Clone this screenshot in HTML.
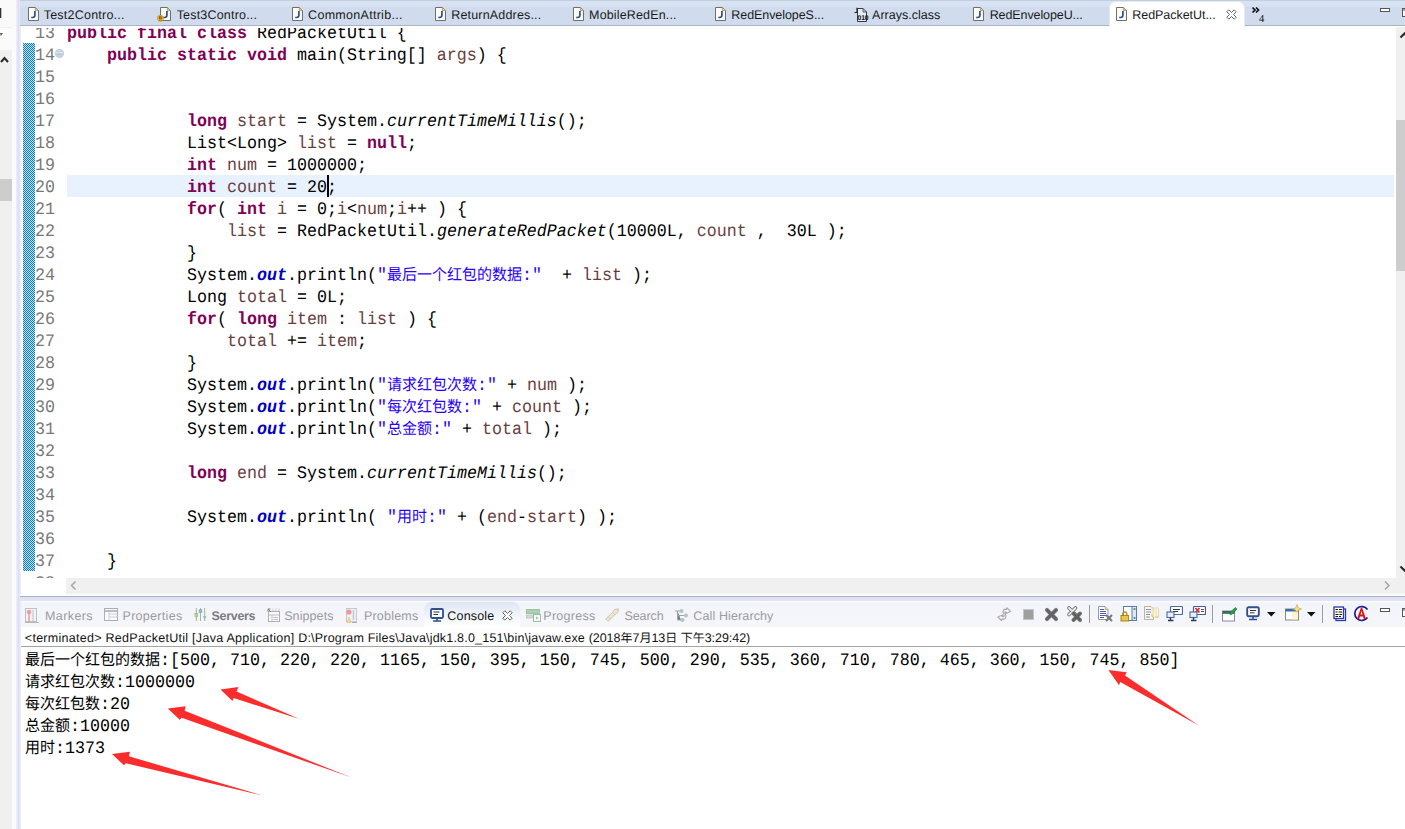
<!DOCTYPE html>
<html><head><meta charset="utf-8"><title>Eclipse</title>
<style>
*{box-sizing:border-box;margin:0;padding:0}
html,body{width:1405px;height:829px;overflow:hidden;background:#fff}
body{position:relative;font-family:"Liberation Sans",sans-serif;font-size:12.5px;color:#000;text-rendering:geometricPrecision;-webkit-font-smoothing:antialiased}
.abs{position:absolute}
/* left strip */
#left{position:absolute;left:0;top:0;width:12px;height:829px;background:#f0f0f0}
#leftw{position:absolute;left:12px;top:0;width:8px;height:829px;background:#fbfbfd}
#ledge{position:absolute;left:16px;top:0;width:5px;height:829px;background:linear-gradient(90deg,#f1f1fb,#dcdff5 50%,#eef0fa)}
/* editor tab bar */
#tabbar{position:absolute;left:20px;top:0;width:1385px;height:26px;background:linear-gradient(#c3cddd 0,#c3cddd 1px,#d8e3f3 1px,#d6e1f1 6px,#d0dced 8px,#d0dcee 100%);border-bottom:1px solid #aab4c6}
.tab{position:absolute;top:0;height:26px;white-space:nowrap}
.tab svg{position:absolute;top:7px;left:0}
.tab span{position:absolute;left:16px;top:7.5px;line-height:15px;color:#1a1a1a}
#atab{position:absolute;left:1109px;top:1px;width:136px;height:26px;background:#fff;border-radius:7px 7px 0 0;border:1px solid #e4eaf4;border-bottom:0}
/* editor */
#ed{position:absolute;left:0;top:0;width:1405px;height:578px;overflow:hidden;clip-path:inset(28px 0 0 0)}
.ln,.cl,.co{position:absolute;font-family:"Liberation Mono",monospace;font-size:16.664px;line-height:22px;height:22px;white-space:pre;transform:scaleY(1.06);transform-origin:0 15.5px}
.ln{left:35px;width:20px;color:#787878;text-align:right}
.k{color:#7f0055;font-weight:bold}
.v{color:#6a3e3e}
.s{color:#2a00ff}
.i{font-style:italic}
.f{color:#0000c0;font-weight:bold;font-style:italic}
.co{left:25px}
span.cj{font-family:"Liberation Mono","Noto Sans CJK SC",monospace;font-size:15px;letter-spacing:0}
span.cjs{font-family:"Liberation Sans","Noto Sans CJK SC",sans-serif;font-size:12px;letter-spacing:0}
#qd{position:absolute;left:23px;top:43px;width:12px;height:528px;background-color:#4f9fd6;
 background-image:linear-gradient(45deg,#2f86c4 25%,transparent 25%,transparent 75%,#2f86c4 75%),linear-gradient(45deg,#2f86c4 25%,transparent 25%,transparent 75%,#2f86c4 75%);background-size:2px 2px;background-position:0 0,1px 1px}
/* scrollbars */
#vsb{position:absolute;left:1396px;top:27px;width:9px;height:551px;background:#f0f0f0}
#vth{position:absolute;left:1396px;top:120px;width:9px;height:151px;background:#cdcdcd}
#hsb{position:absolute;left:66px;top:578px;width:1339px;height:16px;background:#f0f0f0}
#lth{position:absolute;left:0;top:179px;width:12px;height:22px;background:#cdcdcd}
/* bottom panel */
#gap{position:absolute;left:20px;top:594px;width:1385px;height:7px;background:linear-gradient(#fdfdfe 0,#fdfdfe 2px,#aab2c6 2px,#aab2c6 3px,#dcdff0 3px,#e2e5f4 7px)}
#btabs{position:absolute;left:21px;top:601px;width:1384px;height:26px;background:linear-gradient(#fbfcfe 0,#f1f4fb 3px,#f4f5fa 8px,#f5f5fa 100%)}
.bt{position:absolute;top:601px;height:26px;white-space:nowrap}
.bt svg{position:absolute;left:0;top:7px}
.bt span{position:absolute;top:7.5px;line-height:15px;color:#9b9ba1}
#ctab{position:absolute;left:424px;top:602px;width:96px;height:26px;border-radius:7px 7px 0 0;background:linear-gradient(#dfe6f3,#f4f7fb 60%,#fff)}
#desc{position:absolute;left:25px;top:631px;line-height:15px;white-space:nowrap;font-size:12.5px;color:#111}
#sep{position:absolute;left:21px;top:646px;width:1384px;height:1px;background:#a3a3a3}
.tsep{position:absolute;top:605px;width:1px;height:18px;background:#9a9aa6}
.ic{position:absolute}
</style></head>
<body>
<svg width="0" height="0" style="position:absolute"><defs>
<g id="jf"><path d="M.5 .5H7.3L10.5 3.7V13.5H.5Z" fill="#fcfcf6" stroke="#6f6f66"/><path d="M7.3 .5V3.7H10.5Z" fill="#e2cfa0" stroke="#a08a5c" stroke-width=".7"/><path d="M6.9 3.9V8.3Q6.9 10.5 4.6 10.5H3.2" stroke="#2c4f96" stroke-width="1.700" fill="none"/></g>
<g id="cx"><path d="M.8 2.800 2.800 .8 5.500 3.500 8.200 .8 10.200 2.800 7.500 5.500 10.200 8.200 8.200 10.200 5.500 7.500 2.800 10.200 .8 8.200 3.500 5.500Z" fill="#fff" stroke="#686868" stroke-width="1"/></g>
<g id="mn"><rect x=".5" y=".5" width="9" height="3" fill="#fff" stroke="#555"/></g>
<g id="mx"><rect x=".5" y=".5" width="9" height="8" fill="#fff" stroke="#555"/><path d="M.5 2H9.5" stroke="#555"/></g>
</defs></svg>
<div id="left"></div><div id="leftw"></div><div id="ledge"></div>
<div id="lth"></div>
<!-- left strip details -->
<svg class="abs" style="left:0;top:0" width="20" height="110" viewBox="0 0 20 110">
<rect x="0" y="0" width="16" height="27" fill="#fafafa"/>
<path d="M.5 8V18" stroke="#333" stroke-width="1.6"/>
<rect x="0" y="28" width="12" height="22" fill="#fbfbfb"/>
<path d="M0 33H3L.8 36Z" fill="#555"/>
<path d="M1 62 4.500 58 8 62" stroke="#2a2a2a" stroke-width="2.100" fill="none"/>
</svg>
<div id="tabbar"></div>
<div id="atab"></div>
<div class="tab" style="left:28px"><svg width="12" height="15" viewBox="0 0 12 15"><use href="#jf"/></svg><span style="left:15.7px;letter-spacing:0.229px" id="t28">Test2Contro...</span></div>
<div class="tab" style="left:161px"><svg width="16" height="16" viewBox="0 0 16 16" style="left:-4px"><g transform="translate(3,0)"><use href="#jf"/></g><circle cx="3.400" cy="11.300" r="3.100" fill="#e6ad34" stroke="#c8922a" stroke-width=".6"/><path d="M2.700 9.300V12.200M4.100 9.300V12.200" stroke="#4a3a10" stroke-width=".8"/><path d="M2.700 13.200v.5M4.100 13.200v.5" stroke="#4a3a10" stroke-width=".8"/></svg><span style="left:15.7px;letter-spacing:0.186px" id="t161">Test3Contro...</span></div>
<div class="tab" style="left:292px"><svg width="12" height="15" viewBox="0 0 12 15"><use href="#jf"/></svg><span style="left:16.1px;letter-spacing:0.287px" id="t292">CommonAttrib...</span></div>
<div class="tab" style="left:435px"><svg width="12" height="15" viewBox="0 0 12 15"><use href="#jf"/></svg><span style="left:16.3px;letter-spacing:0.167px" id="t435">ReturnAddres...</span></div>
<div class="tab" style="left:573px"><svg width="12" height="15" viewBox="0 0 12 15"><use href="#jf"/></svg><span style="left:16.1px;letter-spacing:0.15px" id="t573">MobileRedEn...</span></div>
<div class="tab" style="left:715px"><svg width="12" height="15" viewBox="0 0 12 15"><use href="#jf"/></svg><span style="left:16.3px;letter-spacing:-0.067px" id="t715">RedEnvelopeS...</span></div>
<div class="tab" style="left:855px"><svg width="16" height="15" viewBox="0 0 16 15" style="left:-1px"><path d="M3.500 1.500H9L12.500 5V14.500H3.500Z" fill="#e4ecf6" stroke="#3a3a3a" stroke-width="1"/><path d="M9 1.500V5H12.500" fill="none" stroke="#3a3a3a" stroke-width=".8"/><path d="M.5 5.500H3.500M3 .8V5.500" stroke="#222" stroke-width="1.200"/><text x="3.600" y="12.800" font-family="Liberation Sans" font-size="6.800" font-weight="bold" fill="#111" letter-spacing="-.2">010</text></svg><span style="left:17.1px;letter-spacing:0.008px" id="t855">Arrays.class</span></div>
<div class="tab" style="left:973px"><svg width="12" height="15" viewBox="0 0 12 15"><use href="#jf"/></svg><span style="left:16.7px;letter-spacing:-0.1px" id="t973">RedEnvelopeU...</span></div>
<div class="tab" style="left:1116px"><svg width="12" height="15" viewBox="0 0 12 15"><use href="#jf"/></svg><span style="left:16.3px;letter-spacing:-0.05px" id="t1116">RedPacketUt...</span></div>
<svg class="abs" style="left:1226px;top:8.5px" width="11" height="11" viewBox="0 0 11 11"><use href="#cx"/></svg>
<svg class="abs" style="left:1251px;top:6px" width="16" height="16" viewBox="0 0 16 16"><path d="M1.500 1.500 4 4 1.500 6.500M5 1.500 7.500 4 5 6.500" stroke="#111" stroke-width="1.700" fill="none"/><text x="8" y="15.500" font-family="Liberation Serif" font-size="10.500" fill="#111">4</text></svg>
<svg class="abs" style="left:1380px;top:8px" width="10" height="4" viewBox="0 0 10 4"><use href="#mn"/></svg>
<svg class="abs" style="left:1402px;top:8px" width="10" height="9" viewBox="0 0 10 9"><use href="#mx"/></svg>
<div id="ed">
<div class="abs" style="left:67px;top:175px;width:1327px;height:22px;background:#e8f2fe"></div>
<svg class="abs" style="left:23px;top:43px" width="12" height="528" shape-rendering="crispEdges"><defs><pattern id="ck" width="2" height="2" patternUnits="userSpaceOnUse"><rect width="2" height="2" fill="#b4e8fb"/><rect width="1" height="1" fill="#1a72c0"/><rect x="1" y="1" width="1" height="1" fill="#1a72c0"/></pattern></defs><rect width="12" height="528" fill="url(#ck)"/></svg>
<svg class="abs" style="left:55px;top:49px" width="9" height="9" viewBox="0 0 9 9"><circle cx="4.500" cy="4.500" r="4.200" fill="#c6d3e5" stroke="#b4c3d9" stroke-width=".6"/><path d="M1.500 4H7.500" stroke="#f6f9fc" stroke-width="1"/><path d="M1.800 5H7.200" stroke="#9fb0c8" stroke-width=".8"/></svg>
<div class="ln" style="top:24px">13</div>
<div class="cl" style="top:24px;left:67px"><span class="k">public final class</span> RedPacketUtil {</div>
<div class="ln" style="top:46px">14</div>
<div class="cl" style="top:46px;left:107px"><span class="k">public static void</span> main(String[] <span class="v">args</span>) {</div>
<div class="ln" style="top:68px">15</div>
<div class="ln" style="top:90px">16</div>
<div class="ln" style="top:112px">17</div>
<div class="cl" style="top:112px;left:187px"><span class="k">long</span> <span class="v">start</span> = System.<span class="i">currentTimeMillis</span>();</div>
<div class="ln" style="top:134px">18</div>
<div class="cl" style="top:134px;left:187px">List&lt;Long&gt; <span class="v">list</span> = <span class="k">null</span>;</div>
<div class="ln" style="top:156px">19</div>
<div class="cl" style="top:156px;left:187px"><span class="k">int</span> <span class="v">num</span> = 1000000;</div>
<div class="ln" style="top:178px">20</div>
<div class="cl" style="top:178px;left:187px"><span class="k">int</span> <span class="v">count</span> = 20;</div>
<div class="ln" style="top:200px">21</div>
<div class="cl" style="top:200px;left:187px"><span class="k">for</span>( <span class="k">int</span> <span class="v">i</span> = 0;<span class="v">i</span>&lt;<span class="v">num</span>;<span class="v">i</span>++ ) {</div>
<div class="ln" style="top:222px">22</div>
<div class="cl" style="top:222px;left:227px"><span class="v">list</span> = RedPacketUtil.<span class="i">generateRedPacket</span>(10000L, <span class="v">count</span> ,  30L );</div>
<div class="ln" style="top:244px">23</div>
<div class="cl" style="top:244px;left:187px">}</div>
<div class="ln" style="top:266px">24</div>
<div class="cl" style="top:266px;left:187px">System.<span class="f">out</span>.println(<span class="s">"<span class="cj">最后一个红包的数据</span>:"</span>  + <span class="v">list</span> );</div>
<div class="ln" style="top:288px">25</div>
<div class="cl" style="top:288px;left:187px">Long <span class="v">total</span> = 0L;</div>
<div class="ln" style="top:310px">26</div>
<div class="cl" style="top:310px;left:187px"><span class="k">for</span>( <span class="k">long</span> <span class="v">item</span> : <span class="v">list</span> ) {</div>
<div class="ln" style="top:332px">27</div>
<div class="cl" style="top:332px;left:227px"><span class="v">total</span> += <span class="v">item</span>;</div>
<div class="ln" style="top:354px">28</div>
<div class="cl" style="top:354px;left:187px">}</div>
<div class="ln" style="top:376px">29</div>
<div class="cl" style="top:376px;left:187px">System.<span class="f">out</span>.println(<span class="s">"<span class="cj">请求红包次数</span>:"</span> + <span class="v">num</span> );</div>
<div class="ln" style="top:398px">30</div>
<div class="cl" style="top:398px;left:187px">System.<span class="f">out</span>.println(<span class="s">"<span class="cj">每次红包数</span>:"</span> + <span class="v">count</span> );</div>
<div class="ln" style="top:420px">31</div>
<div class="cl" style="top:420px;left:187px">System.<span class="f">out</span>.println(<span class="s">"<span class="cj">总金额</span>:"</span> + <span class="v">total</span> );</div>
<div class="ln" style="top:442px">32</div>
<div class="ln" style="top:464px">33</div>
<div class="cl" style="top:464px;left:187px"><span class="k">long</span> <span class="v">end</span> = System.<span class="i">currentTimeMillis</span>();</div>
<div class="ln" style="top:486px">34</div>
<div class="ln" style="top:508px">35</div>
<div class="cl" style="top:508px;left:187px">System.<span class="f">out</span>.println( <span class="s">"<span class="cj">用时</span>:"</span> + (<span class="v">end</span>-<span class="v">start</span>) );</div>
<div class="ln" style="top:530px">36</div>
<div class="ln" style="top:552px">37</div>
<div class="cl" style="top:552px;left:107px">}</div>
<div class="ln" style="top:574px">38</div>
<div class="abs" style="left:327px;top:175px;width:2px;height:22px;background:#000"></div>
</div>
<div id="vsb"></div><div id="vth"></div>
<svg class="abs" style="left:1395px;top:27px" width="10" height="551" viewBox="0 0 10 551"><path d="M5.500 10.500 9.500 6.500 13.500 10.500" stroke="#2a2a2a" stroke-width="2.100" fill="none"/><path d="M5.500 539.500 9.500 543.500 13.500 539.500" stroke="#2a2a2a" stroke-width="2.100" fill="none"/></svg>
<div id="hsb"></div>
<svg class="abs" style="left:66px;top:578px" width="1339" height="17" viewBox="0 0 1339 17"><path d="M9.500 3.500 5.500 7.500 9.500 11.500" stroke="#a6a6a6" stroke-width="1.500" fill="none"/><path d="M1319 3.500 1323 7.500 1319 11.500" stroke="#a6a6a6" stroke-width="1.500" fill="none"/></svg>
<div id="gap"></div>
<div id="btabs"></div>
<div id="ctab"></div>
<div class="bt" style="left:25px"><svg width="14" height="15" viewBox="0 0 14 15" opacity=".5"><rect x=".5" y=".5" width="11" height="13" fill="#f4f4f4" stroke="#8a8a8a"/><circle cx="4" cy="4" r="2.300" fill="#e05050"/><path d="M4 6V13" stroke="#e05050" stroke-width="1.600"/><path d="M8 2V13" stroke="#aaa" stroke-width="1.400"/><path d="M0 14.500H14" stroke="#777"/></svg><span id="b25" style="left:20.0px;letter-spacing:0.4px;">Markers</span></div>
<div class="bt" style="left:104px"><svg width="14" height="13" viewBox="0 0 14 13" opacity=".55"><rect x=".5" y=".5" width="13" height="12" fill="#fff" stroke="#70708a"/><path d="M.5 3H13.500" stroke="#70708a" stroke-width="1.600"/><path d="M5 3V12.500M5 6H13.500M5 9H13.500" stroke="#9a9ab0" stroke-width=".8"/></svg><span id="b104" style="left:18.5px;letter-spacing:0.3px;">Properties</span></div>
<div class="bt" style="left:193px"><svg width="13" height="13" viewBox="0 0 14 14" opacity=".6" style="left:1px"><path d="M2.500 0V14M7 0V14M11.500 0V14" stroke="#6a9a3a" stroke-width="1.100"/><rect x="1" y="6" width="3" height="3" fill="#9ac060" stroke="#5a8a2a" stroke-width=".7"/><rect x="5.500" y="2" width="3" height="3" fill="#6a90d0" stroke="#3a60a0" stroke-width=".7"/><path d="M9.500 9h4l-2 3.500z" fill="#5a80d0"/></svg><span id="b193" style="left:18.5px;letter-spacing:-0.3px;font-weight:bold;color:#7b7b81">Servers</span></div>
<div class="bt" style="left:267px"><svg width="14" height="14" viewBox="0 0 14 14" opacity=".55"><rect x="1.500" y="3.500" width="11" height="10" fill="#fff" stroke="#777"/><path d="M1.500 7H12.500M5 7V13.500M6.500 9.500H11M6.500 11.500H11" stroke="#888" stroke-width=".9"/><path d="M1 1l3 3M1 1h2.500M1 1v2.500" stroke="#222" stroke-width="1"/><path d="M6 .5V3M9 .5V3M12 .5V3" stroke="#999" stroke-width=".8"/></svg><span id="b267" style="left:17.2px;letter-spacing:0.087px;">Snippets</span></div>
<div class="bt" style="left:344px"><svg width="14" height="15" viewBox="0 0 14 15" opacity=".5"><rect x="2.500" y=".5" width="10" height="13" fill="#eef0fa" stroke="#9a9ab0"/><circle cx="5" cy="4" r="2.600" fill="#e04040"/><path d="M3 14.500 5 9l2 5.500z" fill="#f0c020" stroke="#c09000" stroke-width=".6"/><path d="M9.500 2V12" stroke="#99a" stroke-width="1.600"/><path d="M8 14.500H13" stroke="#667"/></svg><span id="b344" style="left:19.9px;letter-spacing:0.225px;">Problems</span></div>
<div class="bt" style="left:430px"><svg width="14" height="14" viewBox="0 0 14 14"><rect x="1" y="1" width="12" height="9" rx="1.200" fill="#fff" stroke="#2f4f8f" stroke-width="1.800"/><path d="M3.500 4H9.500M3.500 6.500H8" stroke="#333" stroke-width="1"/><path d="M7 10V12.500M3 13H11" stroke="#2f4f8f" stroke-width="1.600"/></svg><span id="b430" style="left:17.3px;letter-spacing:0.186px;color:#111">Console</span></div>
<div class="bt" style="left:526px"><svg width="15" height="14" viewBox="0 0 15 14" opacity=".5"><rect x=".5" y="1.500" width="13" height="4" fill="#60b060" stroke="#3a803a" stroke-width=".8"/><rect x=".5" y="7" width="6" height="3" fill="#bbb" stroke="#888" stroke-width=".7"/><rect x="7.500" y="6.500" width="7" height="7" fill="#fff" stroke="#3a903a" stroke-width="1"/><path d="M10 8.500 12.500 10 10 11.500z" fill="#3a903a"/></svg><span id="b526" style="left:17.3px;letter-spacing:0.275px;">Progress</span></div>
<div class="bt" style="left:605px"><svg width="15" height="14" viewBox="0 0 15 14" opacity=".45"><path d="M.8 11 8 3.800 9.500 1.500 13.500 .8 12.800 4.500 10.500 6.200 3.200 13.400z" fill="#ead890" stroke="#9a8a50" stroke-width=".9"/><path d="M3 8.500 5.500 11M7.500 4.500 10 7" stroke="#9a8a50" stroke-width=".8"/></svg><span id="b605" style="left:19.5px;letter-spacing:-0.1px;">Search</span></div>
<div class="bt" style="left:674px"><svg width="15" height="15" viewBox="0 0 15 15" opacity=".5"><path d="M1 3H6M3.500 3V12H7M3.500 7.500H10" stroke="#555" stroke-width="1"/><circle cx="7.500" cy="3" r="2" fill="#5aa08a"/><circle cx="12" cy="7.500" r="2" fill="#8a8aa0"/><circle cx="8.500" cy="12" r="2" fill="#5aa08a"/></svg><span id="b674" style="left:19.3px;letter-spacing:0.121px;">Call Hierarchy</span></div>
<svg class="abs" style="left:501.5px;top:610px" width="11" height="11" viewBox="0 0 11 11"><use href="#cx"/></svg>
<svg class="ic" style="left:996px;top:605px" width="18" height="18" viewBox="0 0 18 18" opacity="1"><g fill="none" stroke-linecap="round" stroke-linejoin="round"><path d="M7.500 8.500C6 6 8 3.500 10.500 4.500L11 3 14.500 6.500 10 8.500 10.300 7C9 6.600 8.500 7.500 9 8.500" stroke="#adadad" stroke-width="1.300" fill="#fdfdfd"/><path d="M9.500 9.500C11 12 9 15 6 14L5.500 15.500 2 12 6.500 10 6.300 11.600C7.800 12 8.500 10.800 8 9.800" stroke="#adadad" stroke-width="1.300" fill="#fdfdfd"/></g></svg>
<svg class="ic" style="left:1023px;top:609px" width="11" height="11" viewBox="0 0 11 11" opacity="1"><rect x=".5" y=".5" width="10" height="10" fill="#9f9f9f" stroke="#c4c4c4"/></svg>
<svg class="ic" style="left:1044px;top:607px" width="15" height="15" viewBox="0 0 15 15" opacity="1"><path d="M3 3 12 12M12 3 3 12" stroke="#8c8c8c" stroke-width="4.200" stroke-linecap="round"/><path d="M3 3 12 12M12 3 3 12" stroke="#646464" stroke-width="3" stroke-linecap="round"/></svg>
<svg class="ic" style="left:1066px;top:605px" width="17" height="17" viewBox="0 0 17 17" opacity="1"><path d="M3 3 9.500 9.500M9.500 3 3 9.500" stroke="#6e6e6e" stroke-width="3.600" stroke-linecap="round"/><path d="M3 3 9.500 9.500M9.500 3 3 9.500" stroke="#ececec" stroke-width="1.800" stroke-linecap="round"/><path d="M7.500 8.500 14 15M14 8.500 7.500 15" stroke="#8a8a8a" stroke-width="4" stroke-linecap="round"/><path d="M7.500 8.500 14 15M14 8.500 7.500 15" stroke="#606060" stroke-width="2.800" stroke-linecap="round"/></svg>
<div class="tsep" style="left:1089px"></div>
<svg class="ic" style="left:1097px;top:605px" width="17" height="17" viewBox="0 0 17 17" opacity="1"><path d="M1.500 1.500H8L11 4.500V14.500H1.500Z" fill="#fff" stroke="#8a8aa0" stroke-width=".9"/><path d="M8 1.500V4.500H11" fill="#e8d8a0" stroke="#b0a060" stroke-width=".7"/><path d="M3 4.500H7M3 6.500H9M3 8.500H9M3 10.500H9M3 12.500H7" stroke="#4a5ab0" stroke-width="1"/><path d="M9 10l6 6M15 10l-6 6" stroke="#777" stroke-width="2"/></svg>
<svg class="ic" style="left:1120px;top:606px" width="17" height="16" viewBox="0 0 17 16" opacity="1"><rect x="3.500" y=".5" width="13" height="14" fill="#fff" stroke="#5a7ab0"/><rect x="12" y=".5" width="4.500" height="14" fill="#dde6f4" stroke="#5a7ab0"/><path d="M13.500 3H15.500M13.500 12H15.500" stroke="#3a8a3a" stroke-width="1.500"/><path d="M2.800 10V8a2 2 0 0 1 4 0V10" fill="none" stroke="#b09020" stroke-width="1.400"/><rect x="1" y="9.500" width="7.600" height="5.500" fill="#e8c840" stroke="#a08010" stroke-width=".9"/></svg>
<svg class="ic" style="left:1143px;top:605px" width="17" height="17" viewBox="0 0 17 17" opacity="0.85"><path d="M1.500 1.500H8L10.500 4V14.500H1.500Z" fill="#fffef4" stroke="#b0a070" stroke-width=".9"/><path d="M3 4.500H8M3 7H8M3 9.500H7M3 12H7" stroke="#6a7ab0" stroke-width="1.100"/><path d="M9 5h4v7h2.500" fill="none" stroke="#d0b050" stroke-width="1.200"/><path d="M8 9.500h3l-1.500 3z" fill="#d0b050"/><rect x="9" y="3" width="6.500" height="9" fill="#fdf6d8" stroke="#d8c070" stroke-width=".8" opacity=".7"/></svg>
<svg class="ic" style="left:1166px;top:605px" width="17" height="17" viewBox="0 0 17 17" opacity="1"><rect x="4.500" y="1.500" width="12" height="8" rx="1" fill="#fff" stroke="#4a6aa0" stroke-width="1.200"/><path d="M7 4.500H14M7 6.500H12" stroke="#333" stroke-width="1"/><rect x="1" y="7" width="7" height="5.500" fill="#e8eef8" stroke="#4a6aa0" stroke-width="1.100"/><path d="M4.500 12.500V15M2 15.500H7.500" stroke="#2a3a60" stroke-width="1.400"/></svg>
<svg class="ic" style="left:1189px;top:605px" width="17" height="17" viewBox="0 0 17 17" opacity="1"><rect x="4.500" y="1.500" width="12" height="8" rx="1" fill="#fff" stroke="#4a5a90" stroke-width="1.200"/><path d="M6.500 3l4 4.500M10.500 3l-4 4.500" stroke="#d03030" stroke-width="1.800"/><path d="M12 4.500H15M12 6.500H15" stroke="#555" stroke-width="1"/><rect x="1" y="7" width="7" height="5.500" fill="#e8eef8" stroke="#4a6aa0" stroke-width="1.100"/><path d="M4.500 12.500V15M2 15.500H7.500" stroke="#2a3a60" stroke-width="1.400"/></svg>
<div class="tsep" style="left:1212px"></div>
<svg class="ic" style="left:1221px;top:606px" width="18" height="16" viewBox="0 0 18 16" opacity="1"><rect x="1.500" y="5" width="12" height="10" fill="#fff" stroke="#8a8a9a"/><rect x="1.500" y="5" width="12" height="2.800" fill="#3a6a5a"/><path d="M8 7.500 12 3.500 14.500 1.500 16 3 14 5.500 10 9z" fill="#2a9a4a" stroke="#1a7a3a" stroke-width=".6"/></svg>
<svg class="ic" style="left:1246px;top:606px" width="14" height="15" viewBox="0 0 14 15" opacity="1"><rect x="1.200" y="1.200" width="11.600" height="9" rx="1.400" fill="#fff" stroke="#2f4f8f" stroke-width="1.900"/><path d="M4 4.500H10M4 6.800H8.500" stroke="#333" stroke-width="1"/><path d="M7 10.500V13M3 13.500H11" stroke="#2f4f8f" stroke-width="1.600"/></svg>
<svg class="ic" style="left:1267px;top:612px" width="9" height="5" viewBox="0 0 9 5" opacity="1"><path d="M0 0H8.500L4.250 4.500Z" fill="#111"/></svg>
<svg class="ic" style="left:1284px;top:604px" width="18" height="18" viewBox="0 0 18 18" opacity="1"><rect x="1.500" y="5" width="13" height="11" fill="#fff" stroke="#8a8a7a"/><rect x="1.500" y="5" width="13" height="2.500" fill="#3a6ab0"/><path d="M13 0.500 14.200 3.800 17.500 5 14.200 6.200 13 9.500 11.800 6.200 8.500 5 11.800 3.800Z" fill="#f8e08a" stroke="#c0a040" stroke-width=".6"/><rect x="8" y="8" width="6" height="7.500" fill="#fbf3c8" opacity=".8"/></svg>
<svg class="ic" style="left:1307px;top:612px" width="9" height="5" viewBox="0 0 9 5" opacity="1"><path d="M0 0H8.500L4.250 4.500Z" fill="#111"/></svg>
<div class="tsep" style="left:1322px"></div>
<svg class="ic" style="left:1333px;top:606px" width="14" height="16" viewBox="0 0 14 16" opacity="1"><rect x="3" y="3" width="9.500" height="11.500" fill="#fff" stroke="#2a3aa0" stroke-width="1.300"/><rect x="1" y="1" width="9.500" height="11.500" fill="#fffef0" stroke="#2a3aa0" stroke-width="1.300"/><path d="M2.500 3.500H5M6 3.500H9M2.500 6H4.500M5.500 6H9M2.500 8.500H5.500M6.500 8.500H9M2.500 10.500H5M6 10.500H8" stroke="#111" stroke-width="1.200"/></svg>
<svg class="ic" style="left:1353px;top:605px" width="17" height="17" viewBox="0 0 17 17" opacity="1"><path d="M14.500 4.500A7 7 0 1 0 14.500 12.500" fill="none" stroke="#1a1a9a" stroke-width="1.700"/><path d="M4 14 8 2.500h1L13 14h-2.200L10 11.500H7L6.200 14z M7.500 9.500h2L8.500 6z" fill="#e01010" fill-rule="evenodd"/></svg>
<svg class="abs" style="left:1380px;top:608px" width="10" height="4" viewBox="0 0 10 4"><use href="#mn"/></svg>
<svg class="abs" style="left:1402px;top:608px" width="10" height="9" viewBox="0 0 10 9"><use href="#mx"/></svg>
<div id="desc"><span id="d1" class="abs" style="white-space:pre;left:-0.2px;top:0;letter-spacing:0.278px">&lt;terminated&gt; RedPacketUtil [Java Application] </span><span id="d2" class="abs" style="white-space:pre;left:273.2px;top:0;letter-spacing:0.2px">D:\Program Files\Java\jdk1.8.0_151\bin\javaw.exe </span><span id="d3" class="abs" style="white-space:pre;left:563.7px;top:0;letter-spacing:-0.045px">(2018<span class="cjs">年</span>7<span class="cjs">月</span>13<span class="cjs">日</span> <span class="cjs">下午</span>3:29:42)</span></div>
<div id="sep"></div>
<div class="co" style="top:651px"><span class="cj">最后一个红包的数据</span>:[500, 710, 220, 220, 1165, 150, 395, 150, 745, 500, 290, 535, 360, 710, 780, 465, 360, 150, 745, 850]</div>
<div class="co" style="top:673px"><span class="cj">请求红包次数</span>:1000000</div>
<div class="co" style="top:695px"><span class="cj">每次红包数</span>:20</div>
<div class="co" style="top:717px"><span class="cj">总金额</span>:10000</div>
<div class="co" style="top:739px"><span class="cj">用时</span>:1373</div>
<svg class="abs" style="left:0;top:0;pointer-events:none" width="1405" height="829" viewBox="0 0 1405 829" fill="#fb2c2c"><polygon points="220.5,689.5 238.5,687.0 236.5,691.5 299.5,719.0 233.5,698.0 232.5,701.0"/><polygon points="167.8,708.4 185.7,706.2 184.7,710.8 351.5,777.6 181.7,717.8 179.7,719.8"/><polygon points="112.0,754.0 129.9,751.7 128.9,756.3 262.4,795.5 125.9,763.2 123.9,765.2"/><polygon points="1108.4,670.1 1126.7,672.2 1125.0,675.5 1198.8,725.4 1120.2,682.0 1119.1,685.3"/></svg>
</body></html>
